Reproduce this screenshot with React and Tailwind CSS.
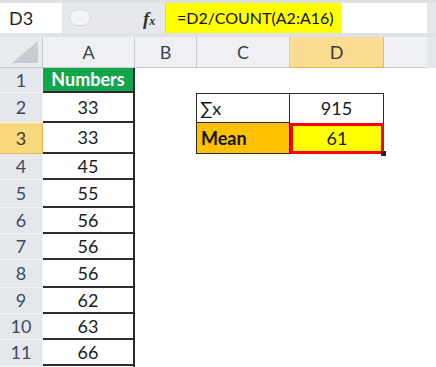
import React from 'react';

const ROWS = [
  { n: 1, h: 'h-[25px]', a: 'Numbers' },
  { n: 2, h: 'h-[30px]', a: '33' },
  { n: 3, h: 'h-[31px]', a: '33' },
  { n: 4, h: 'h-[26px]', a: '45' },
  { n: 5, h: 'h-[28px]', a: '55' },
  { n: 6, h: 'h-[26px]', a: '56' },
  { n: 7, h: 'h-[26px]', a: '56' },
  { n: 8, h: 'h-[28px]', a: '56' },
  { n: 9, h: 'h-[26px]', a: '62' },
  { n: 10, h: 'h-[26px]', a: '63' },
  { n: 11, h: 'h-[26px]', a: '66' },
  { n: 12, h: 'h-[26px]', a: '' },
];

const COLS = [
  { key: 'A', w: 'w-[92px]' },
  { key: 'B', w: 'w-[62px]' },
  { key: 'C', w: 'w-[93px]' },
  { key: 'D', w: 'w-[94px]' },
];

const FormulaBar = () => (
  <div className="flex h-[33px] border-t-[3px] border-[#dde1e6] bg-[#e4e7eb]">
    <div className="w-[62px] flex items-center pl-[9px] text-[18px] text-[#1f1f1f] bg-white">D3</div>
    <div className="w-[104px] flex items-center bg-[#e6e8eb] rounded-l-[16px] relative border-r border-[#c9cdd2]">
      <div className="absolute left-[7px] top-[6px] w-[22px] h-[17px] rounded-full bg-[#f2f3f5] border border-[#d4d7db]" />
      <span className="absolute left-[81px] top-[2px] font-['Liberation_Serif',serif] italic font-bold text-[19px] text-[#333]">
        f<span className="text-[12px]">x</span>
      </span>
    </div>
    <div className="w-[261px] h-full flex items-center bg-white">
      <div className="h-full flex items-center bg-[#ffff00] pl-[11px] pr-[8px] text-[16px] text-[#111]">
        =D2/COUNT(A2:A16)
      </div>
    </div>
    <div className="flex-1 h-full bg-[#e4e7eb]" />
  </div>
);

const HeaderRow = () => (
  <div className="flex h-[35px] border-t-[4px] border-[#dfe3e8] bg-[#e4e7eb]">
    <div className="w-[43px] h-full bg-[#e8ebef] border-r border-b border-[#c4c9d1] relative overflow-hidden">
      <svg className="absolute right-[4px] bottom-[4px]" width="26" height="22" viewBox="0 0 26 22">
        <polygon points="26,0 26,22 0,22" fill="#c8ccd2" />
      </svg>
    </div>
    {COLS.map((c) => (
      <div
        key={c.key}
        className={`${c.w} h-full flex items-center justify-center text-[18px] border-r border-b ${
          c.key === 'D'
            ? 'bg-[#fcdc92] border-[#f0b450] text-[#3a3a3a]'
            : 'bg-[#eef0f3] border-[#c9cdd3] text-[#3b4350]'
        }`}
      >
        {c.key}
      </div>
    ))}
    <div className="w-[43px] h-full bg-[#eef0f3] border-b border-[#c9cdd3]" />
    <div className="flex-1 h-full bg-[#e4e7eb]" />
  </div>
);

const SheetRow = ({ row }) => {
  const sel = row.n === 3;
  return (
    <div className={`flex ${row.h}`}>
      <div
        className={`w-[43px] h-full flex items-center justify-center text-[18px] border-r border-b ${
          sel ? 'bg-[#f9d97e] border-[#f0b450] text-[#3a3a3a]' : 'bg-[#e4e7ec] border-[#f4f5f7] text-[#3e4a5c]'
        }`}
      >
        {row.n < 12 ? row.n : ''}
      </div>
      {row.n === 1 ? (
        <div className="w-[92px] h-full flex items-center justify-center bg-[#12a54c] border-r-2 border-b-2 border-[#2b2b2b] text-white font-bold text-[18px]">
          {row.a}
        </div>
      ) : (
        <div className="w-[92px] h-full flex items-center justify-center bg-white border-r-2 border-b-2 border-[#2b2b2b] text-[18px] text-[#1a1a1a]">
          {row.a}
        </div>
      )}
      <div className="w-[61px] h-full bg-white" />
      {row.n === 2 && (
        <>
          <div className="w-[94px] h-full flex items-center pl-[3px] bg-white border-[1.5px] border-[#2b2b2b] text-[18px] text-[#1a1a1a]">
            ∑x
          </div>
          <div className="w-[94px] h-full flex items-center justify-center bg-white border-t-[1.5px] border-r-[1.5px] border-[#2b2b2b] text-[18px] text-[#1a1a1a]">
            915
          </div>
        </>
      )}
      {row.n === 3 && (
        <>
          <div className="w-[94px] h-full flex items-center pl-[4px] bg-[#ffc000] border-l-[1.5px] border-r-[1.5px] border-b-[1.5px] border-[#2b2b2b] text-[18px] font-bold text-[#111]">
            Mean
          </div>
          <div className="w-[94px] h-full relative flex items-center justify-center bg-[#ffff00] border-[3px] border-[#ff0000] text-[18px] text-[#1a1a1a]">
            61
            <div className="absolute right-[-5px] bottom-[-5px] w-[5px] h-[5px] bg-[#222]" />
          </div>
        </>
      )}
      <div className="flex-1 h-full bg-white" />
    </div>
  );
};

export default function App() {
  return (
    <div className="w-[436px] h-[367px] overflow-hidden bg-white font-['Lato','Liberation_Sans',sans-serif]">
      <FormulaBar />
      <HeaderRow />
      {ROWS.map((r) => (
        <SheetRow key={r.n} row={r} />
      ))}
    </div>
  );
}
